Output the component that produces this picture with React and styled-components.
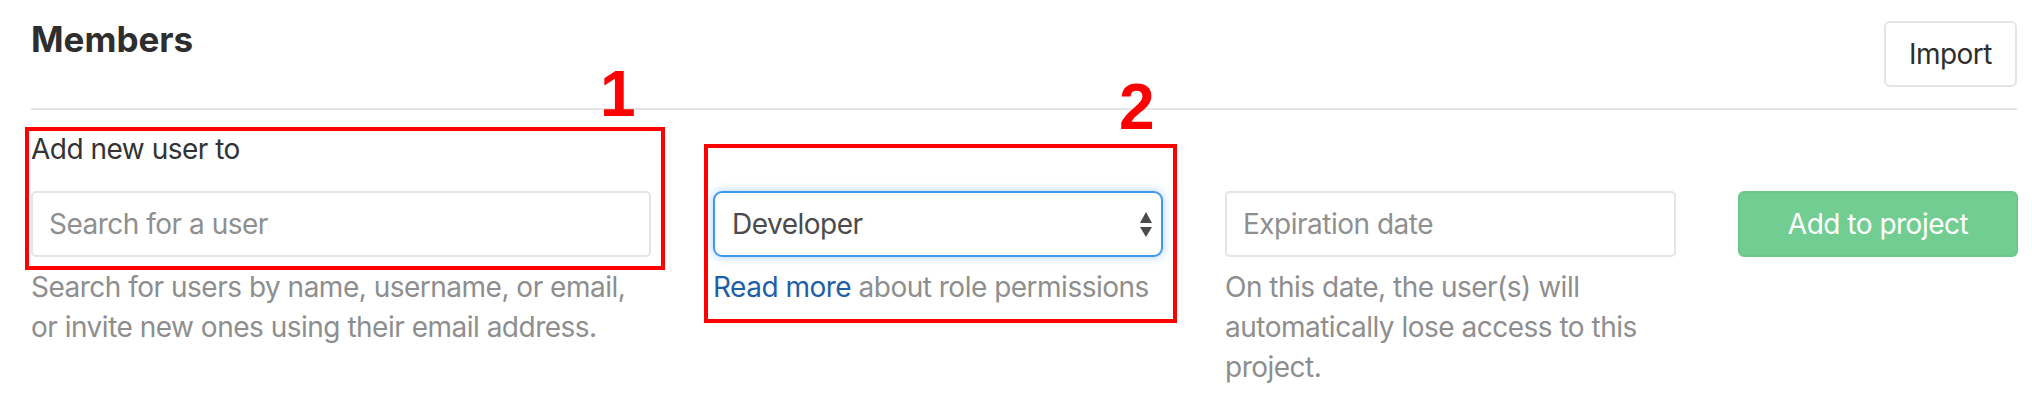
import React from 'react';
import styled, { createGlobalStyle } from 'styled-components';

const GlobalStyle = createGlobalStyle`
  html, body {
    margin: 0;
    padding: 0;
    background: #fff;
  }
  body {
    font-family: Inter, "Noto Sans", sans-serif;
    -webkit-font-smoothing: antialiased;
  }
`;

export default function App() {
  return (
    <Page>
      <GlobalStyle />
      <Header>
        <Title>Members</Title>
        <ImportButton>Import</ImportButton>
      </Header>

      <Form>
        <Label>Add new user to</Label>
        <Spacer />
        <Spacer />
        <Spacer />

        <TextInput placeholder="Search for a user" />
        <SelectBox>
          <span>Developer</span>
          <Arrows width="12" height="26" viewBox="0 0 12 26">
            <path d="M6 0 L12 11 L0 11 Z" fill="#4b4b4b" />
            <path d="M0 15 L12 15 L6 25 Z" fill="#4b4b4b" />
          </Arrows>
        </SelectBox>
        <TextInput placeholder="Expiration date" />
        <SubmitButton>Add to project</SubmitButton>

        <Help>
          Search for users by name, username, or email,<br />
          or invite new ones using their email address.
        </Help>
        <Help>
          <Link href="#">Read more</Link> about role permissions
        </Help>
        <Help>
          On this date, the user(s) will<br />
          automatically lose access to this<br />
          project.
        </Help>
        <Spacer />
      </Form>

      <Marker left={25} top={127} width={640} height={143} />
      <Marker left={704} top={144} width={473} height={179} />
      <MarkerNumber left={600} top={62}>1</MarkerNumber>
      <MarkerNumber left={1119} top={75}>2</MarkerNumber>
    </Page>
  );
}

const Page = styled.div`
  position: relative;
  width: 2032px;
  height: 402px;
  box-sizing: border-box;
  padding: 0 15px 0 31px;
  overflow: hidden;
  letter-spacing: -0.5px;
`;

const Header = styled.div`
  display: flex;
  justify-content: space-between;
  align-items: flex-start;
  padding: 21px 0 21px;
  border-bottom: 2px solid #e5e5e5;
`;

const Title = styled.h4`
  margin: -2px 0 0;
  font-size: 35px;
  line-height: 41px;
  font-weight: 700;
  letter-spacing: 0;
  color: #2e2e2e;
`;

const ImportButton = styled.button`
  height: 66px;
  padding: 0 23px;
  background: #fff;
  border: 2px solid #e5e5e5;
  border-radius: 6px;
  font-family: inherit;
  font-size: 28px;
  letter-spacing: -0.5px;
  color: #2e2e2e;
`;

const Form = styled.div`
  display: grid;
  grid-template-columns: 620px 450px 451px 280px;
  column-gap: 62px;
  padding-top: 19px;
`;

const Spacer = styled.div``;

const Label = styled.label`
  font-size: 28px;
  line-height: 40px;
  color: #333;
  margin-bottom: 22px;
`;

const controlBase = `
  box-sizing: border-box;
  height: 66px;
  width: 100%;
  font-family: inherit;
  font-size: 28px;
  letter-spacing: -0.5px;
`;

const TextInput = styled.input`
  ${controlBase}
  padding: 0 16px;
  border: 2px solid #e5e5e5;
  border-radius: 5px;
  color: #2e2e2e;
  outline: none;
  &::placeholder {
    color: #8f8f8f;
  }
`;

const SelectBox = styled.div`
  ${controlBase}
  display: flex;
  align-items: center;
  justify-content: space-between;
  padding: 0 9px 0 17px;
  border: 2px solid #3f97ee;
  border-radius: 9px;
  color: #4b4b4b;
  box-shadow: 0 0 10px rgba(63, 151, 238, 0.45);
`;

const Arrows = styled.svg`
  display: block;
  margin-top: 2px;
`;

const SubmitButton = styled.button`
  ${controlBase}
  border: 2px solid #6cc78b;
  border-radius: 6px;
  background: #72cd92;
  color: #fff;
`;

const Help = styled.p`
  margin: 10px 0 0;
  font-size: 28px;
  line-height: 40px;
  color: #8e8e8e;
  white-space: nowrap;
`;

const Link = styled.a`
  color: #1f5fa8;
  text-decoration: none;
`;

const Marker = styled.div`
  position: absolute;
  left: ${(p) => p.left}px;
  top: ${(p) => p.top}px;
  width: ${(p) => p.width}px;
  height: ${(p) => p.height}px;
  box-sizing: border-box;
  border: 4px solid #ff0000;
  pointer-events: none;
`;

const MarkerNumber = styled.div`
  position: absolute;
  left: ${(p) => p.left}px;
  top: ${(p) => p.top}px;
  font-family: "Liberation Sans", Arial, sans-serif;
  font-weight: 700;
  font-size: 64px;
  line-height: 1;
  letter-spacing: 0;
  color: #ff0000;
`;
